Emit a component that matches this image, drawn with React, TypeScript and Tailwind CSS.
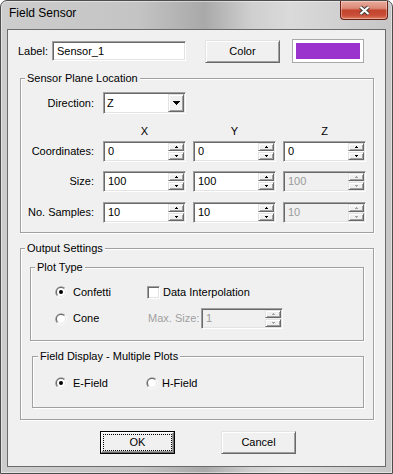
const sunken =
  "border border-t-[#a0a0a0] border-l-[#a0a0a0] border-r-white border-b-white shadow-[inset_1px_1px_0_#696969,inset_-1px_-1px_0_#e3e3e3]";
const raised =
  "border border-t-[#e3e3e3] border-l-[#e3e3e3] border-r-[#696969] border-b-[#696969] shadow-[inset_1px_1px_0_#fff,inset_-1px_-1px_0_#a0a0a0] bg-[#f0f0f0]";
const group =
  "border border-[#a0a0a0] shadow-[1px_1px_0_#fff,inset_1px_1px_0_#fff] min-w-0";
const legend = "px-[2px] leading-[13px] bg-[#f0f0f0]";

function Arrow({ up, color }: { up?: boolean; color: string }) {
  return (
    <svg width="5" height="2" viewBox="0 0 5 2" className="block">
      {up ? (
        <>
          <rect x="2" y="0" width="1" height="1" fill={color} />
          <rect x="1" y="1" width="3" height="1" fill={color} />
        </>
      ) : (
        <>
          <rect x="1" y="0" width="3" height="1" fill={color} />
          <rect x="2" y="1" width="1" height="1" fill={color} />
        </>
      )}
    </svg>
  );
}

function SpinBtn({ up, disabled }: { up?: boolean; disabled?: boolean }) {
  return (
    <div className={`flex h-[8px] w-[16px] items-center justify-center ${raised}`}>
      <Arrow up={up} color={disabled ? "#a0a0a0" : "#000"} />
    </div>
  );
}

function SpinBox({ value, disabled, w = 83 }: { value: string; disabled?: boolean; w?: number }) {
  return (
    <div
      className={`flex h-[21px] shrink-0 p-px ${sunken} ${disabled ? "bg-[#f0f0f0] text-[#9a9a9a]" : "bg-white"}`}
      style={{ width: w }}
    >
      <span className="flex-1 pl-[3px] leading-[17px]">{value}</span>
      <div className="flex flex-col gap-px">
        <SpinBtn up disabled={disabled} />
        <SpinBtn disabled={disabled} />
      </div>
    </div>
  );
}

function Radio({ checked }: { checked?: boolean }) {
  return (
    <svg width="12" height="12" viewBox="0 0 12 12" className="block shrink-0">
      <path d="M1.76 10.24A6 6 0 0 1 10.24 1.76Z" fill="#a0a0a0" />
      <path d="M10.24 1.76A6 6 0 0 1 1.76 10.24Z" fill="#fff" />
      <path d="M2.46 9.54A5 5 0 0 1 9.54 2.46Z" fill="#696969" />
      <path d="M9.54 2.46A5 5 0 0 1 2.46 9.54Z" fill="#e3e3e3" />
      <circle cx="6" cy="6" r="4" fill="#fff" />
      {checked && <circle cx="6" cy="6" r="2" fill="#000" />}
    </svg>
  );
}

function Row({ label, children, className = "" }: { label: string; children: React.ReactNode; className?: string }) {
  return (
    <div className={`flex items-center ${className}`}>
      <span className="w-[73px] text-right">{label}</span>
      <div className="ml-[9px] flex gap-[7px]">{children}</div>
    </div>
  );
}

export default function App() {
  return (
    <div className="h-[474px] w-[393px] font-['Liberation_Sans',Arial,sans-serif] text-[11px] text-black">
      <div className="flex h-full w-full flex-col rounded-t-[7px] border border-[#4d4d4d] bg-[linear-gradient(90deg,#cdcdcd_0%,#c4c4c4_35%,#a9a9a9_52%,#cfcfcf_64%,#dadada_74%,#c6c6c6_100%)] shadow-[inset_0_0_0_1px_rgba(255,255,255,0.45)]">
        {/* title bar */}
        <div className="flex h-[28px] items-start">
          <span className="pl-[8px] pt-[5px] text-[12px] leading-[15px]">Field Sensor</span>
          <div className="ml-auto mr-[4px] flex h-[19px] w-[48px] items-center justify-center rounded-b-[4px] border border-t-0 border-[#6b1e12] bg-[linear-gradient(180deg,#e9ab9c_0%,#dc8a77_40%,#c4442e_52%,#c94f38_80%,#dc7d62_100%)] shadow-[inset_0_0_0_1px_rgba(255,255,255,0.35)]">
            <svg width="13" height="11" viewBox="0 0 13 11" className="block">
              <path d="M2.5 2 L10.5 9 M10.5 2 L2.5 9" stroke="#3a3a3a" strokeWidth="4" />
              <path d="M2.5 2 L10.5 9 M10.5 2 L2.5 9" stroke="#fff" strokeWidth="2.2" />
            </svg>
          </div>
        </div>

        {/* client area */}
        <div className="mx-[6px] flex h-[438px] flex-col border border-[#6b6b6b] bg-[#f0f0f0]">
          <div className="mt-[9px] flex h-[24px] items-center">
            <span className="ml-[10px] w-[34px]">Label:</span>
            <div className={`flex h-[20px] w-[134px] items-center bg-white pl-[4px] ${sunken}`}>Sensor_1</div>
            <div className={`ml-[19px] flex h-[23px] w-[75px] items-center justify-center ${raised}`}>Color</div>
            <div className="ml-[12px] h-[24px] w-[72px] border border-[#a9a9a9] bg-white p-[3px]">
              <div className="h-full w-full bg-[#9a32cd]" />
            </div>
          </div>

          {/* Sensor Plane Location */}
          <fieldset className={`ml-[12px] mt-[9px] w-[354px] pb-[9px] ${group}`}>
            <legend className={`ml-[4px] ${legend}`}>Sensor Plane Location</legend>
            <Row label="Direction:" className="mt-[7px]">
              <div className={`flex h-[22px] w-[83px] bg-white p-px ${sunken}`}>
                <span className="flex-1 pl-[2px] leading-[18px]">Z</span>
                <div className={`flex h-full w-[16px] items-center justify-center ${raised}`}>
                  <svg width="7" height="4" viewBox="0 0 7 4" className="block">
                    <rect x="0" y="0" width="7" height="1" />
                    <rect x="1" y="1" width="5" height="1" />
                    <rect x="2" y="2" width="3" height="1" />
                    <rect x="3" y="3" width="1" height="1" />
                  </svg>
                </div>
              </div>
            </Row>
            <div className="mt-[10px] ml-[82px] flex h-[14px] gap-[7px] leading-[14px]">
              <span className="w-[83px] text-center">X</span>
              <span className="w-[83px] text-center">Y</span>
              <span className="w-[83px] text-center">Z</span>
            </div>
            <Row label="Coordinates:" className="mt-[3px]">
              <SpinBox value="0" />
              <SpinBox value="0" />
              <SpinBox value="0" />
            </Row>
            <Row label="Size:" className="mt-[9px]">
              <SpinBox value="100" />
              <SpinBox value="100" />
              <SpinBox value="100" disabled />
            </Row>
            <Row label="No. Samples:" className="mt-[10px]">
              <SpinBox value="10" />
              <SpinBox value="10" />
              <SpinBox value="10" disabled />
            </Row>
          </fieldset>

          {/* Output Settings */}
          <fieldset className={`ml-[12px] mt-[9px] w-[354px] pb-[11px] ${group}`}>
            <legend className={`ml-[4px] ${legend}`}>Output Settings</legend>

            <fieldset className={`ml-[9px] mt-[6px] w-[334px] pb-[11px] ${group}`}>
              <legend className={`ml-[4px] ${legend}`}>Plot Type</legend>
              <div className="ml-[24px] mt-[10px] flex h-[16px] items-center">
                <div className="flex w-[92px] items-center gap-[6px]">
                  <Radio checked />
                  <span>Confetti</span>
                </div>
                <div className="flex items-center gap-[3px]">
                  <div className={`h-[13px] w-[13px] bg-white ${sunken}`} />
                  <span>Data Interpolation</span>
                </div>
              </div>
              <div className="ml-[24px] mt-[8px] flex h-[21px] items-center">
                <div className="flex w-[93px] items-center gap-[6px]">
                  <Radio />
                  <span>Cone</span>
                </div>
                <span className="w-[53px] text-[#a0a0a0]">Max. Size:</span>
                <SpinBox value="1" disabled w={82} />
              </div>
            </fieldset>

            <fieldset className={`ml-[11px] mt-[9px] w-[332px] pb-[16px] ${group}`}>
              <legend className={`ml-[5px] ${legend}`}>Field Display - Multiple Plots</legend>
              <div className="ml-[22px] mt-[12px] flex h-[16px] items-center">
                <div className="flex w-[91px] items-center gap-[6px]">
                  <Radio checked />
                  <span>E-Field</span>
                </div>
                <div className="flex items-center gap-[4px]">
                  <Radio />
                  <span>H-Field</span>
                </div>
              </div>
            </fieldset>
          </fieldset>

          {/* buttons */}
          <div className="ml-[92px] mt-[11px] flex gap-[46px]">
            <div className="h-[23px] w-[75px] border border-black bg-[#f0f0f0]">
              <div className="h-full w-full border border-t-white border-l-white border-r-[#696969] border-b-[#696969] p-px shadow-[inset_-1px_-1px_0_#a0a0a0]">
                <div className="flex h-full w-full items-center justify-center border border-dotted border-black">OK</div>
              </div>
            </div>
            <div className={`flex h-[23px] w-[75px] items-center justify-center ${raised}`}>Cancel</div>
          </div>
        </div>
      </div>
    </div>
  );
}
